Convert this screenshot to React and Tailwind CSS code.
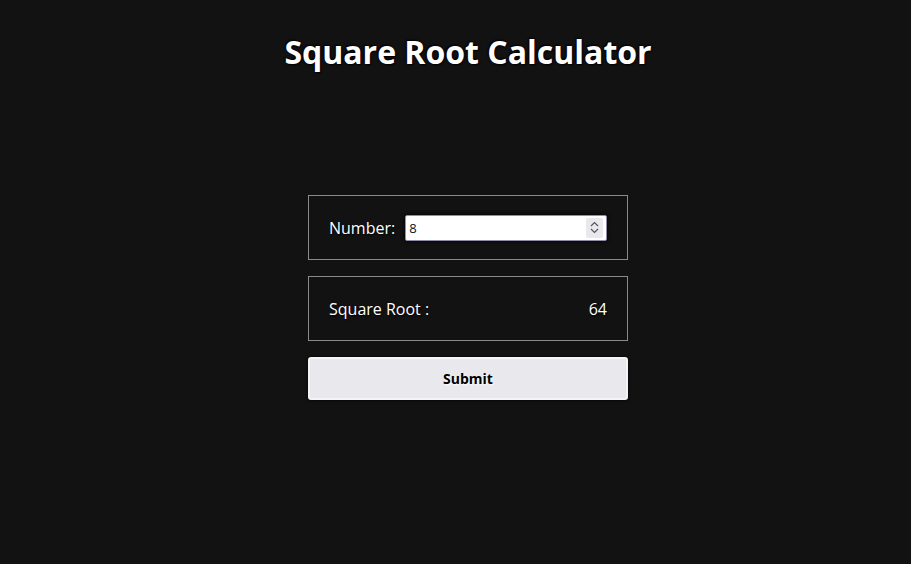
import React from "react";

export default function App() {
  return (
    <div className="min-h-[564px] w-full bg-[#121212] font-['Open_Sans',sans-serif] text-white">
      <div className="flex flex-col items-center pl-[25px]">
        <h1 className="mt-[30px] text-[32px] font-bold leading-[44px] [text-shadow:1px_1px_2px_#000,-1px_-1px_2px_#000]">
          Square Root Calculator
        </h1>
        <div className="mt-[121px] flex w-[320px] flex-col gap-4">
          <div className="flex h-[65px] items-center border border-[#8a8a8a] px-5">
            <label className="text-[16px] [text-shadow:1px_1px_2px_#000]">Number:</label>
            <div className="relative ml-[10px]">
              <input
                type="number"
                defaultValue="8"
                className="block h-[26px] w-[202px] rounded-[2px] border border-[#8f8fa8] bg-white px-[3px] text-[13px] text-[#111] shadow-[0_0_4px_#000] outline-none [appearance:textfield] [&::-webkit-inner-spin-button]:appearance-none [&::-webkit-outer-spin-button]:appearance-none"
              />
              <div className="pointer-events-none absolute right-[4px] top-[3px] flex h-[20px] w-[17px] flex-col items-center justify-center gap-[1px] rounded-[2px] bg-[#e9e9ed]">
                <svg width="9" height="6" viewBox="0 0 9 6" fill="none" stroke="#555" strokeWidth="1.2">
                  <path d="M1 5 L4.5 1.5 L8 5" />
                </svg>
                <svg width="9" height="6" viewBox="0 0 9 6" fill="none" stroke="#555" strokeWidth="1.2">
                  <path d="M1 1 L4.5 4.5 L8 1" />
                </svg>
              </div>
            </div>
          </div>
          <div className="flex h-[65px] items-center justify-between border border-[#8a8a8a] px-5 text-[16px] [text-shadow:1px_1px_2px_#000]">
            <span>Square Root :</span>
            <span>64</span>
          </div>
          <button className="h-[43px] rounded-[3px] border-2 border-[#f4f4f6] bg-[#e9e8ed] text-[14px] font-bold text-black shadow-[0_0_3px_#000] [text-shadow:1px_1px_2px_#fff]">
            Submit
          </button>
        </div>
      </div>
    </div>
  );
}
